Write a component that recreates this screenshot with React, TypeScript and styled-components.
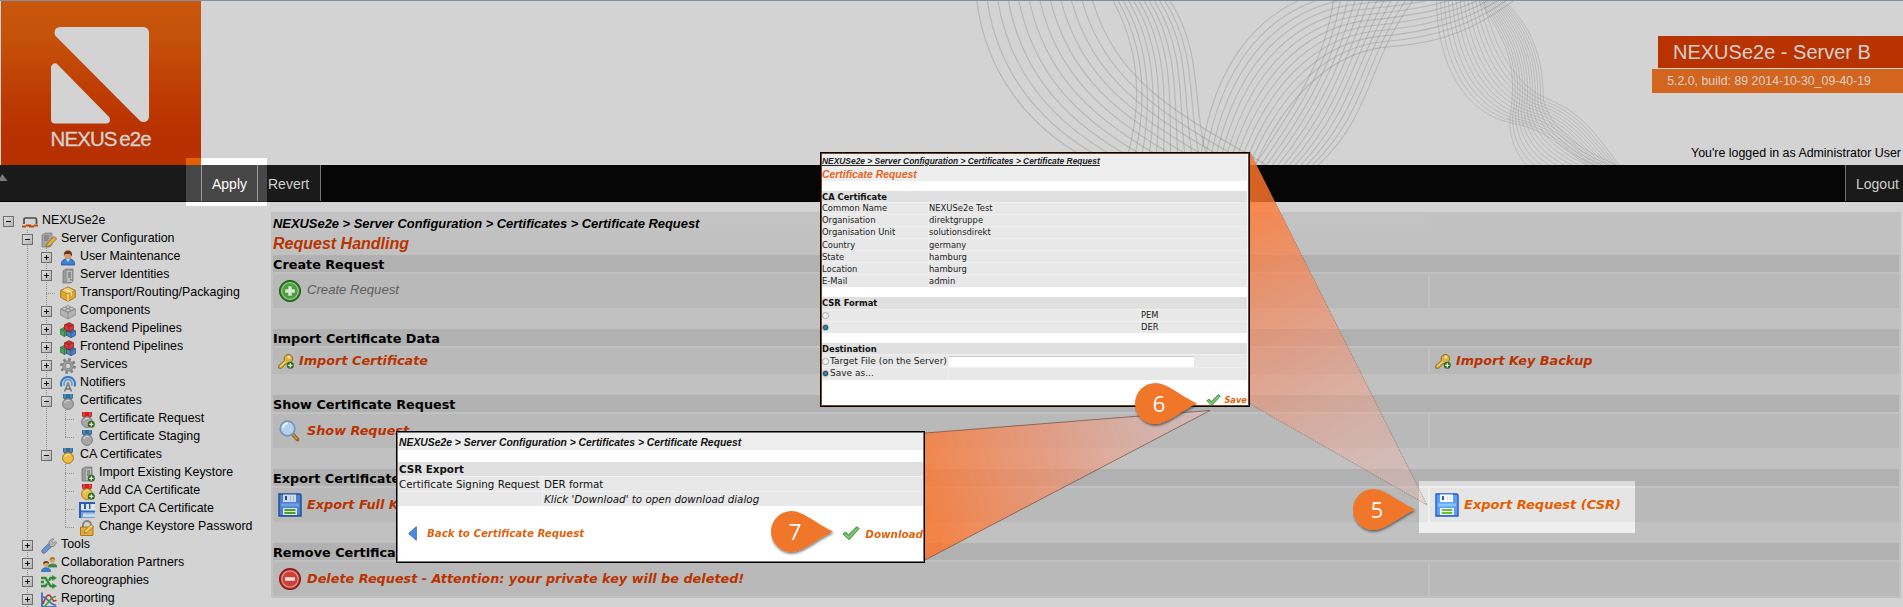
import React from 'react';
import styled, { createGlobalStyle, css } from 'styled-components';

const arial = '"Liberation Sans", Arial, sans-serif';
const verdana = '"DejaVu Sans", Verdana, sans-serif';

const Global = createGlobalStyle`
  * { box-sizing: border-box; }
  html, body { margin: 0; padding: 0; background: #d3d3d3; overflow: hidden; }
  svg { display: block; flex: none; }
`;

/* ---------- page frame ---------- */

const Page = styled.div`
  position: relative;
  height: 607px;
  overflow: hidden;
  display: flex;
  flex-direction: column;
  background: #d3d3d3;
  border-top: 1px solid #8090a8;
  font-family: ${arial};
  color: #000;
  white-space: nowrap;
`;

const Header = styled.header`
  position: relative;
  height: 164px;
  flex: none;
  display: flex;
  justify-content: space-between;
  padding-left: 1px;
`;

const Logo = styled.div`
  width: 200px;
  height: 164px;
  position: relative;
  background: linear-gradient(#c8560b 0%, #c6520a 22%, #bd3a02 60%, #b83100 82%, #b63000 100%);
`;

const WaveLayer = styled.div`
  position: absolute;
  left: 930px;
  top: -1px;
`;

const HeaderInfo = styled.div`
  position: relative;
  display: flex;
  flex-direction: column;
  align-items: flex-end;
  padding-top: 35px;
`;

const ServerName = styled.div`
  height: 32px;
  width: 245px;
  padding-left: 15px;
  line-height: 33px;
  font-size: 20px;
  background: #b93300;
  color: #d6d0cd;
`;

const BuildInfo = styled.div`
  height: 24px;
  margin-top: 1px;
  padding: 0 32px 0 15px;
  line-height: 24px;
  font-size: 12.35px;
  background: #d4651f;
  color: #dcd2ca;
`;

const UserInfo = styled.div`
  margin: 52px 2px 0 0;
  font-size: 12.4px;
  line-height: 17px;
`;

const NavBar = styled.nav`
  height: 37px;
  flex: none;
  display: flex;
  background: #060606;
  border-bottom: 1px solid #000;
  font-size: 14px;
  line-height: 38px;
  color: #d0d0d0;
`;

const NavSpacer = styled.div`
  width: 201px;
  background: #1a1a1a;
  padding-top: 9px;
`;

const NavItem = styled.div<{ $w: number; $pad: number; $end?: boolean }>`
  width: ${p => p.$w}px;
  padding-left: ${p => p.$pad}px;
  background: #1a1a1a;
  border-left: 1px solid #737373;
  ${p => p.$end && css`margin-left: auto;`}
`;

const NavEdge = styled.div`
  width: 1px;
  background: #737373;
`;

const Body = styled.div`
  flex: 1;
  display: flex;
  align-items: flex-start;
  padding-top: 10px;
`;

/* ---------- navigation tree ---------- */

const Tree = styled.aside`
  width: 271px;
  flex: none;
  padding-left: 3px;
`;

const TreeRow = styled.div`
  display: flex;
  height: 18px;
`;

const dots = 'repeating-linear-gradient(#8f8f8f 0 1px, transparent 1px 2px)';

const Guide = styled.div<{ $line: 'full' | 'half' | 'none'; $branch?: boolean }>`
  width: 19px;
  height: 18px;
  background-repeat: no-repeat;
  background-image: ${p => (p.$line === 'none' ? 'none' : dots)}
    ${p => p.$branch && ', repeating-linear-gradient(90deg, #8f8f8f 0 1px, transparent 1px 2px)'};
  background-position: 5px 0, 5px 9px;
  background-size: 1px ${p => (p.$line === 'half' ? '10px' : '100%')}, 9px 1px;
`;

const ToggleBox = styled.div`
  position: relative;
  top: 4px;
  width: 11px;
  height: 11px;
  border: 1px solid #6f6f6f;
  background: linear-gradient(135deg, #dedede, #b5b5b5);
`;

const Sign = styled.div<{ $plus: boolean }>`
  width: 9px;
  height: 9px;
  background:
    linear-gradient(#111, #111) 2px 4px / 5px 1px no-repeat
    ${p => p.$plus && ', linear-gradient(#111, #111) 4px 2px / 1px 5px no-repeat'};
`;

const TreeIcon = styled.div`
  width: 20px;
  padding-top: 2px;
`;

const TreeLabel = styled.span`
  font-size: 12.38px;
  line-height: 17px;
`;

/* ---------- main content ---------- */

const Main = styled.main`
  flex: 1;
  margin-right: 2px;
  padding: 2px;
  height: 386px;
  background: #c1c1c1;
  display: grid;
  gap: 2px;
  grid-template-columns: 1155px 1fr;
  grid-template-rows: 17px 20px 17px 34px 17px 17px 26px 17px 17px 34px 17px 17px 34px 17px 17px 34px;
`;

const Breadcrumb = styled.div`
  background: #c3c3c3;
  font: italic bold 12.92px/19px ${arial};
`;

const Title = styled.h1`
  grid-column: 1 / -1;
  margin: 0;
  font: italic bold 16px/21px ${arial};
  color: #b93300;
`;

const SectionHead = styled.h2`
  grid-column: 1 / -1;
  margin: 0;
  background: #b1b1b1;
  font: bold 12.8px/20px ${verdana};
`;

const Gap = styled.div`
  grid-column: 1 / -1;
`;

const Cell = styled.div`
  display: flex;
  align-items: center;
  gap: 5px;
  padding-left: 5px;
  background: #b9b9b9;
`;

const Action = styled.a<{ $lit?: boolean }>`
  font: italic bold 12.82px/16px ${verdana};
  color: ${p => (p.$lit ? '#b94c00' : '#b93300')};
  ${p => p.$lit && css`font-size: 13px;`}
`;

const DisabledAction = styled.span`
  font: italic 13.14px/16px ${arial};
  color: #5e5e5e;
  padding-bottom: 3px;
`;

/* ---------- annotations above the page ---------- */

const Overlay = styled.div`
  position: absolute;
  inset: -1px 0 0 0;
`;

const ApplySpot = styled.div`
  position: absolute;
  left: 186px;
  top: 158px;
  width: 81px;
  height: 48px;
  background: #fff;
`;

const SpotCorner = styled.div`
  width: 15px;
  height: 7px;
  background: #e66000;
`;

const SpotNav = styled.div`
  display: flex;
  height: 37px;
  padding-left: 15px;
  background: #474747;
  border-bottom: 1px solid #333;
`;

const SpotButton = styled.div`
  width: 57px;
  border: solid #9a9a9a;
  border-width: 0 1px;
  padding-left: 10px;
  font-size: 14px;
  line-height: 38px;
  color: #fff;
`;

const ExportSpot = styled.div`
  position: absolute;
  left: 1419px;
  top: 481px;
  width: 216px;
  height: 52px;
  backdrop-filter: brightness(1.24);
`;

const Beams = styled.svg`
  position: absolute;
  left: 0;
  top: 0;
`;

const Callout = styled.div<{ $x: number; $y: number }>`
  position: absolute;
  left: ${p => p.$x}px;
  top: ${p => p.$y}px;
`;

const CalloutDigit = styled.span`
  position: absolute;
  left: 14px;
  top: 0;
  width: 20px;
  text-align: center;
  font: 400 22.5px/41px "Open Sans", "Noto Sans", sans-serif;
  color: #fff;
`;

const Dialog = styled.section<{ $size: number }>`
  position: absolute;
  background: #fff;
  border: 1px solid #000;
  font: ${p => p.$size}px ${verdana};
  color: #222;
`;

const RequestDialog = styled(Dialog)`
  left: 820px;
  top: 152px;
  width: 430px;
  height: 255px;
  box-shadow: inset 0 0 0 1px #7a4320;
  padding: 1px 2px 0 1px;
`;

const ExportDialog = styled(Dialog)`
  left: 396px;
  top: 431px;
  width: 529px;
  height: 132px;
  border-width: 1px;
  box-shadow: inset 0 0 0 1px #777;
  padding: 1px;
  color: #111;
`;

const DialogHead = styled.div<{ $h: number }>`
  height: ${p => p.$h}px;
  background: #eee;
`;

const RequestCrumb = styled.div`
  font: italic bold 8.42px/14px ${arial};
  text-decoration: underline;
`;

const RequestTitle = styled.div`
  font: italic bold 10.4px/13px ${arial};
  color: #e8641b;
`;

const ExportCrumb = styled.div`
  padding-left: 1px;
  font: italic bold 10.37px/19px ${arial};
`;

const Group = styled.div<{ $top: number; $cols: string; $row: number; $inset?: number }>`
  display: grid;
  grid-template-columns: ${p => p.$cols};
  grid-auto-rows: ${p => p.$row}px;
  gap: 1px;
  margin-top: ${p => p.$top}px;
  background: #efefef;
  line-height: ${p => p.$row + 1}px;
  & > * { padding-left: ${p => p.$inset ?? 0}px; }
`;

const GroupHead = styled.div`
  grid-column: 1 / -1;
  background: #e0e0e0;
  font-weight: bold;
  color: #111;
`;

const Field = styled.div<{ $italic?: boolean }>`
  display: flex;
  align-items: center;
  background: #e8e8e8;
  ${p => p.$italic && css`font-style: italic;`}
`;

const WideText = styled.span`
  font-size: 9px;
`;

const Radio = styled.i<{ $on?: boolean }>`
  width: 7px;
  height: 7px;
  margin-right: 1px;
  border-radius: 50%;
  border: 1px solid #a8a8a8;
  background: ${p => (p.$on ? 'radial-gradient(circle, #2a86b8 0 30%, #123f66 60%)' : '#f4f4f4')};
`;

const TextInput = styled.div`
  width: 245px;
  height: 11px;
  background: #fff;
  border-top: 1px solid #ccc;
`;

const SaveBar = styled.div`
  display: flex;
  justify-content: flex-end;
  align-items: center;
  gap: 3px;
  margin-top: 13.5px;
`;

const ExportBar = styled.div`
  display: flex;
  align-items: center;
  margin-top: 17.5px;
  height: 20px;
  padding-left: 10px;
`;

const DialogLink = styled.a<{ $size: number }>`
  font: italic bold ${p => p.$size}px/14px ${verdana};
  color: #e4600f;
`;

const BackLabel = styled(DialogLink)`
  margin: 0 auto 0 10px;
`;

const DownloadLabel = styled(DialogLink)`
  margin-left: 5px;
`;

/* ---------- drawings ---------- */

type Pt = [number, number];
type Family = { a: Pt[]; b: Pt[]; n: number; w: number };

const families: Family[] = [
  { a: [[140, 0], [165, 200], [280, 390], [520, 500]], b: [[487, 0], [560, 240], [720, 330], [1010, 495]], n: 12, w: 3.3 },
  { a: [[548, 0], [625, 140], [640, 300], [592, 470]], b: [[718, 0], [820, 150], [785, 310], [830, 470]], n: 12, w: 3.3 },
  {
    a: [[812, 470], [850, 200], [980, 20], [1200, -30], [1320, -50], [1500, -30], [1700, -120]],
    b: [[975, 495], [1080, 260], [1230, 150], [1380, 140], [1530, 130], [1640, 90], [1780, -20]], n: 12, w: 3.3,
  },
  { a: [[975, 495], [1100, 310], [1190, 170], [1210, 0]], b: [[1165, 495], [1330, 340], [1310, 190], [1450, 0]], n: 12, w: 3.3 },
  {
    a: [[1520, 0], [1520, 200], [1610, 340], [1740, 368], [1860, 390], [1880, 440], [1975, 495]],
    b: [[1660, 0], [1700, 180], [1780, 270], [1860, 300], [1960, 340], [2010, 420], [2067, 495]], n: 13, w: 2.6,
  },
  {
    a: [[1645, 0], [1730, 120], [1765, 200], [1740, 350], [1735, 420], [1765, 470], [1790, 495]],
    b: [[1720, 0], [1820, 90], [1840, 200], [1840, 300], [1860, 380], [1930, 440], [2060, 495]], n: 13, w: 2.6,
  },
];

const strand = (f: Family, i: number) => {
  const t = i / (f.n - 1);
  const p = f.a.map(([x, y], k) => `${(x + (f.b[k][0] - x) * t).toFixed(1)} ${(y + (f.b[k][1] - y) * t).toFixed(1)}`);
  return `M${p[0]}C${p.slice(1).join(' ')}`;
};

const Waves = () => (
  <svg width="973" height="165" viewBox="0 0 2919 495" fill="none" stroke="#808080" strokeOpacity=".34">
    {families.map((f, k) =>
      Array.from({ length: f.n }, (_, i) => <path key={`${k}-${i}`} d={strand(f, i)} strokeWidth={f.w} />),
    )}
  </svg>
);

const LogoMark = () => (
  <svg width="200" height="164" viewBox="1 1 200 164">
    <g fill="#d3d3d3" stroke="#d3d3d3" strokeLinejoin="round">
      <path d="M60 32.5H143.500V116.500Z" strokeWidth="11" />
      <path d="M55 67.500V119.500H106Z" strokeWidth="8" />
    </g>
    <text
      x="50.500" y="145.500" fontFamily={arial} fontSize="20.500" letterSpacing="-.900"
      fill="#d6d3d0" stroke="#d6d3d0" strokeWidth=".3"
    >
      NEXUS<tspan dx="2.500">e2e</tspan>
    </text>
  </svg>
);

const PlusBadge = () => (
  <g>
    <circle cx="12.300" cy="12.300" r="3.500" fill="#2f6b1d" />
    <path d="M12.300 10.200v4.200M10.200 12.300h4.200" stroke="#e6f2dc" strokeWidth="1.300" />
  </g>
);

const Medal = ({ ribbon, disc, edge }: { ribbon: string; disc: string; edge: string }) => (
  <g>
    <path d="M3 0h10v4l-2 2H5L3 4z" fill={ribbon} />
    <path d="M5 0v4M11 0v4" stroke="#fff" strokeOpacity=".35" />
    <circle cx="8" cy="10" r="5.400" fill={disc} stroke={edge} />
    <path d="M4.800 9a3.500 3.500 0 0 1 5-2.200" stroke="#fff" strokeOpacity=".6" fill="none" />
  </g>
);

const Tower = () => (
  <g>
    <path d="M3 3l3-2h7v12l-2 2H3z" fill="#9b9b9b" stroke="#6f6f6f" strokeWidth=".7" />
    <path d="M7 3h5v11H7z" fill="#bdbdbd" />
    <path d="M8 5h3M8 7h3M8 9h3" stroke="#555" strokeWidth=".9" />
    <path d="M10 11h1.500v1.500H10z" fill="#2f9c2f" />
  </g>
);

const Brick = ({ x, y, c, d }: { x: number; y: number; c: string; d: string }) => (
  <g transform={`translate(${x} ${y})`}>
    <path d="M0 2.500L4.500.500 9 2.500V7L4.500 9.500 0 7z" fill={c} stroke={d} strokeWidth=".7" />
    <path d="M0 2.500l4.500 2 4.500-2M4.500 4.500v5" stroke={d} strokeWidth=".6" fill="none" />
    <ellipse cx="4.500" cy="1.800" rx="2" ry="1.200" fill={c} stroke={d} strokeWidth=".5" />
  </g>
);

const FloppyShape = () => (
  <g>
    <path d="M1 1h21l1 1v21H1z" fill="#4a7fd4" stroke="#1e4b9c" strokeWidth="1.400" />
    <path d="M5 1.500h13V9H5z" fill="#cfd9e8" />
    <path d="M7 3h2v4H7z" fill="#1e4b9c" />
    <path d="M12 3h1v5h-1zM15 3h1v5h-1z" fill="#a9b9d2" />
    <path d="M3 10.500h18v3H3z" fill="#6fa0e6" />
    <path d="M5 15h14v7H5z" fill="#dfe6d8" />
    <path d="M6.500 17h11M6.500 20h11" stroke="#4f9d2c" strokeWidth="1.800" />
  </g>
);

const icons: Record<string, React.ReactNode> = {
  nexus: (
    <g fill="none">
      <path d="M2 10V5.500A1.500 1.500 0 0 1 3.500 4h9.500A1.500 1.500 0 0 1 14.500 5.500V10" stroke="#4b4b4b" strokeWidth="1.700" />
      <path d="M0 12.500h4M4 11.500h4v2M9 12.500h3M12 11.500h4" stroke="#bf4a08" strokeWidth="2.200" />
    </g>
  ),
  config: (
    <g>
      <path d="M1 3l3-2h7v12l-2 2H1z" fill="#a5a5a5" stroke="#767676" strokeWidth=".7" />
      <path d="M3 4h5M3 6h5M3 8h4" stroke="#666" strokeWidth=".8" />
      <path d="M5 15l1.500-4L13 4.500l2.500 2.500L9 13.500z" fill="#e5b23a" stroke="#8f6413" strokeWidth=".8" />
      <path d="M12 5.500L13.500 4 16 6.500 14.500 8z" fill="#d9876c" />
    </g>
  ),
  user: (
    <g>
      <path d="M1.500 15c-1-4 3-6.500 6.500-6.500s7.500 2.500 6.500 6.500z" fill="#3a83d2" stroke="#1c4f94" strokeWidth=".8" />
      <path d="M6 9l2 3 2-3z" fill="#fff" opacity=".7" />
      <circle cx="8" cy="5.500" r="3.600" fill="#dc9a6a" />
      <path d="M4 6C3.500 2 5.500.500 8 .500S12.500 2 12 6c-1.500-1-2-2-2-2.500-1 .700-4 .700-5 .500z" fill="#6b3313" />
    </g>
  ),
  server: <Tower />,
  box: (
    <g>
      <path d="M.700 4.500L8 1l7.300 3.500v7L8 15.300.700 11.500z" fill="#e2a62f" stroke="#9a6b10" strokeWidth=".8" />
      <path d="M.700 4.500L8 8l7.300-3.500L8 1z" fill="#f2cc6c" stroke="#9a6b10" strokeWidth=".6" />
      <path d="M8 8v7M4.500 3L11.500 6.500v3" stroke="#fff0c0" strokeWidth="1" fill="none" />
    </g>
  ),
  component: (
    <g fill="#b4b4b4" stroke="#7c7c7c" strokeWidth=".7">
      <path d="M.700 5L8 2l7.300 3v6L8 15 .700 11z" />
      <path d="M.700 5L8 8.500 15.300 5M8 8.500V15" fill="none" />
      <ellipse cx="4.500" cy="4.800" rx="2" ry="1.300" fill="#d2d2d2" />
      <ellipse cx="8" cy="3" rx="2" ry="1.300" fill="#d2d2d2" />
      <ellipse cx="11.500" cy="4.800" rx="2" ry="1.300" fill="#d2d2d2" />
      <ellipse cx="8" cy="6.300" rx="2" ry="1.300" fill="#d2d2d2" />
    </g>
  ),
  bricks: (
    <g>
      <Brick x={0} y={5} c="#4fa05a" d="#2c6b35" />
      <Brick x={6.500} y={6.300} c="#4a7fc0" d="#234f86" />
      <Brick x={4.500} y={.3} c="#d63a3a" d="#8d1818" />
    </g>
  ),
  gear: (
    <g>
      <circle cx="8" cy="8" r="6.600" fill="none" stroke="#7d7d7d" strokeWidth="2.600" strokeDasharray="2.600 2.580" />
      <circle cx="8" cy="8" r="4" fill="none" stroke="#8a8a8a" strokeWidth="3.600" />
      <circle cx="8" cy="8" r="4" fill="none" stroke="#a8a8a8" strokeWidth="1.200" />
    </g>
  ),
  antenna: (
    <g fill="none">
      <path d="M1.500 10.500a7 7 0 1 1 13 0" stroke="#3878c8" strokeWidth="2" />
      <path d="M4.500 9.500a4 4 0 1 1 7 0" stroke="#5b97dd" strokeWidth="1.600" />
      <path d="M8 7.500L4.500 15.500M8 7.500l3.500 8M6 13h4" stroke="#707070" strokeWidth="1.500" />
      <circle cx="8" cy="7.500" r="1.400" fill="#8a8a8a" />
    </g>
  ),
  silverMedal: <Medal ribbon="#2f6c9f" disc="#a6a6a6" edge="#7b7b7b" />,
  redMedalPlus: <g><Medal ribbon="#cf2020" disc="#a6a6a6" edge="#7b7b7b" /><PlusBadge /></g>,
  goldMedal: <Medal ribbon="#2f6c9f" disc="#edbd45" edge="#a97a14" />,
  goldMedalPlus: <g><Medal ribbon="#cf2020" disc="#edbd45" edge="#a97a14" /><PlusBadge /></g>,
  serverPlus: <g><Tower /><PlusBadge /></g>,
  disk: (
    <g>
      <path d="M0 0h16v2H2v14H0z" fill="#2a5fb0" />
      <path d="M2 2h14v7H2z" fill="#dfe6ee" />
      <path d="M5 2h2v5H5zM10 2h1.500v5H10z" fill="#355f9e" />
      <path d="M2 8.500h14v2H2z" fill="#2f6cc4" />
      <path d="M2 10.500h14V16H2z" fill="#6f9fdc" />
      <path d="M4 11.500h12V15H4z" fill="#c9d8ea" />
    </g>
  ),
  lock: (
    <g>
      <path d="M4 8V5a4 4 0 0 1 8 0v3" fill="none" stroke="#858585" strokeWidth="2" />
      <path d="M1.500 7h12.500v8.500H1.500z" fill="#e3a93a" stroke="#9a6b10" strokeWidth=".8" />
      <path d="M5 13l1-2.500 6-6 2.500 2-6.500 6z" fill="#f3d070" stroke="#8f6413" strokeWidth=".7" />
    </g>
  ),
  wrench: (
    <g>
      <path d="M1.300 14.700a2.300 2.300 0 0 1 0-3L7.500 5.500l3.200 3.200-6.400 6a2.300 2.300 0 0 1-3 0z" fill="#6e93c8" stroke="#3c5f96" strokeWidth=".7" />
      <path d="M8.500 7l-.500-3.500L11.500.500l1.500.500-2 2.500 1.500 1.500 2.500-1.500.500 1.500-3 3.500H9.500z" fill="#b5b5b5" stroke="#757575" strokeWidth=".7" />
    </g>
  ),
  people: (
    <g>
      <path d="M7 11c0-4 9-4 9-.500V11z" fill="#3f9146" stroke="#245e2a" strokeWidth=".6" />
      <circle cx="11.300" cy="4" r="2.800" fill="#dba36b" /><path d="M8.500 4c0-4 6-4 5.500 0L12 2.800z" fill="#b07416" />
      <path d="M.500 15.500c-.500-5 9.500-5 9 0z" fill="#3a83d2" stroke="#1c4f94" strokeWidth=".6" />
      <circle cx="5" cy="8" r="2.800" fill="#dba36b" /><path d="M2 8c0-4 6.500-4 6 0L6 6.600z" fill="#6b3313" />
    </g>
  ),
  shuffle: (
    <g fill="none" stroke="#2f8a35" strokeWidth="2.300">
      <path d="M0 4h4.500l5 8H12M0 12h4.500l1.500-2.500M8 6.500L9.500 4H12M0 8h3" />
      <path d="M11.500 1.500L15.500 4l-4 2.500zM11.500 9.500l4 2.500-4 2.500z" fill="#2f8a35" strokeWidth=".5" />
    </g>
  ),
  chart: (
    <g fill="none" strokeWidth="1.600">
      <path d="M1 .500V15H15.500" stroke="#2a5fb0" />
      <path d="M2 12C5 3 8 1 10 5s3 5 5.500 3" stroke="#c92a2a" />
      <path d="M2 5c4 0 8 9 13 8" stroke="#2a6fc0" />
      <path d="M2.500 14.500c4 0 6-10 12.500-10" stroke="#3a9a3a" />
    </g>
  ),
};

const KeyIcon = () => (
  <svg width="16" height="16" viewBox="0 0 16 16">
    <path d="M.800 15.200V12.500L6.500 7.500A4.300 4.300 0 1 1 10 10L6.500 11.500 5.500 13.500 3.500 15.200z" fill="#dcb143" stroke="#86640f" strokeWidth=".9" />
    <circle cx="11" cy="4.300" r="1.300" fill="#fbeeb8" />
    <path d="M2 13.500l6-5" stroke="#f6e08e" />
    <PlusBadge />
  </svg>
);

const AddIcon = () => (
  <svg width="24" height="24" viewBox="0 0 24 24">
    <circle cx="12" cy="12" r="10.600" fill="#2c7a24" stroke="#1d5c17" />
    <circle cx="12" cy="12" r="8.300" fill="#4a9e3c" stroke="#a3c499" strokeWidth="1.300" />
    <path d="M12 7.200v9.600M7.200 12h9.600" stroke="#dce6d8" strokeWidth="3.400" />
  </svg>
);

const SearchIcon = () => (
  <svg width="24" height="24" viewBox="0 0 24 24">
    <path d="M14.500 15l5 5.500" stroke="#8f6420" strokeWidth="3.800" strokeLinecap="round" />
    <path d="M14.500 15l4.500 5" stroke="#c99848" strokeWidth="1.600" strokeLinecap="round" />
    <circle cx="9.500" cy="9.500" r="7.300" fill="#b2d1ec" stroke="#7295b8" strokeWidth="1.700" />
    <path d="M5 9a4.500 4.500 0 0 1 5-4.500" stroke="#edf5fb" strokeWidth="1.800" fill="none" />
  </svg>
);

const FloppyIcon = () => <svg width="24" height="24" viewBox="0 0 24 24"><FloppyShape /></svg>;

const StopIcon = () => (
  <svg width="24" height="24" viewBox="0 0 24 24">
    <circle cx="12" cy="12" r="10.400" fill="#bf2b24" stroke="#8c1712" strokeWidth="1.200" />
    <circle cx="12" cy="12" r="8.200" fill="#cc4038" stroke="#d99d97" strokeWidth="1.200" />
    <path d="M7 12h10" stroke="#e6dedd" strokeWidth="3.600" />
  </svg>
);

const CheckIcon = ({ size }: { size: number }) => (
  <svg width={size} height={size * 0.8} viewBox="0 0 20 16">
    <path d="M1 9l3.200-2.300 3 3.300L16.300.800 19 2.800 8 15.200z" fill="#62b857" stroke="#35843a" strokeWidth="1" />
    <path d="M3 9l4.500 4L17 3" stroke="#a9dca0" strokeWidth="1" fill="none" />
  </svg>
);

const BackIcon = () => (
  <svg width="9" height="15" viewBox="0 0 9 15">
    <path d="M8.300.700v13.600L.700 7.500z" fill="#4f8ce0" stroke="#2357a8" strokeWidth=".8" />
  </svg>
);

const Pin = ({ n, x, y }: { n: number; x: number; y: number }) => (
  <Callout $x={x} $y={y}>
    <svg width="68" height="48" viewBox="0 0 68 48">
      <defs>
        <filter id={`shade${n}`} x="-10%" y="-10%" width="130%" height="140%">
          <feDropShadow dx="0.500" dy="1.800" stdDeviation="1.200" floodColor="#000" floodOpacity=".5" />
        </filter>
      </defs>
      <path d="M20.500 0C32 0 46 13 62 20.500C46 28 32 41 20.500 41A20.500 20.500 0 0 1 20.500 0Z" fill="#f0762a" filter={`url(#shade${n})`} />
    </svg>
    <CalloutDigit>{n}</CalloutDigit>
  </Callout>
);

/* ---------- tree data ---------- */

type Node = { label: string; icon: string; level: number; toggle?: '+' | '-'; last?: boolean; closed?: boolean };

const nodes: Node[] = [
  { label: 'NEXUSe2e', icon: 'nexus', level: 0, toggle: '-', last: true },
  { label: 'Server Configuration', icon: 'config', level: 1, toggle: '-' },
  { label: 'User Maintenance', icon: 'user', level: 2, toggle: '+' },
  { label: 'Server Identities', icon: 'server', level: 2, toggle: '+' },
  { label: 'Transport/Routing/Packaging', icon: 'box', level: 2 },
  { label: 'Components', icon: 'component', level: 2, toggle: '+' },
  { label: 'Backend Pipelines', icon: 'bricks', level: 2, toggle: '+' },
  { label: 'Frontend Pipelines', icon: 'bricks', level: 2, toggle: '+' },
  { label: 'Services', icon: 'gear', level: 2, toggle: '+' },
  { label: 'Notifiers', icon: 'antenna', level: 2, toggle: '+' },
  { label: 'Certificates', icon: 'silverMedal', level: 2, toggle: '-' },
  { label: 'Certificate Request', icon: 'redMedalPlus', level: 3 },
  { label: 'Certificate Staging', icon: 'silverMedal', level: 3, last: true },
  { label: 'CA Certificates', icon: 'goldMedal', level: 2, toggle: '-', last: true },
  { label: 'Import Existing Keystore', icon: 'serverPlus', level: 3, closed: true },
  { label: 'Add CA Certificate', icon: 'goldMedalPlus', level: 3, closed: true },
  { label: 'Export CA Certificate', icon: 'disk', level: 3, closed: true },
  { label: 'Change Keystore Password', icon: 'lock', level: 3, last: true, closed: true },
  { label: 'Tools', icon: 'wrench', level: 1, toggle: '+' },
  { label: 'Collaboration Partners', icon: 'people', level: 1, toggle: '+' },
  { label: 'Choreographies', icon: 'shuffle', level: 1, toggle: '+' },
  { label: 'Reporting', icon: 'chart', level: 1, toggle: '+' },
];

const TreeItem = ({ node }: { node: Node }) => (
  <TreeRow>
    {Array.from({ length: node.level }, (_, i) => (
      <Guide key={i} $line={i === 0 || (i === 2 && node.closed) ? 'none' : 'full'} />
    ))}
    <Guide $line={node.level === 0 ? 'none' : node.last ? 'half' : 'full'} $branch={!node.toggle}>
      {node.toggle && <ToggleBox><Sign $plus={node.toggle === '+'} /></ToggleBox>}
    </Guide>
    <TreeIcon><svg width="16" height="16" viewBox="0 0 16 16">{icons[node.icon]}</svg></TreeIcon>
    <TreeLabel>{node.label}</TreeLabel>
  </TreeRow>
);

const subject = [
  ['Common Name', 'NEXUSe2e Test'],
  ['Organisation', 'direktgruppe'],
  ['Organisation Unit', 'solutionsdirekt'],
  ['Country', 'germany'],
  ['State', 'hamburg'],
  ['Location', 'hamburg'],
  ['E-Mail', 'admin'],
];

const crumb = 'NEXUSe2e > Server Configuration > Certificates > Certificate Request';

export default function App() {
  return (
    <Page>
      <Global />
      <Header>
        <WaveLayer><Waves /></WaveLayer>
        <Logo><LogoMark /></Logo>
        <HeaderInfo>
          <ServerName>NEXUSe2e - Server B</ServerName>
          <BuildInfo>5.2.0, build: 89 2014-10-30_09-40-19</BuildInfo>
          <UserInfo>You're logged in as Administrator User</UserInfo>
        </HeaderInfo>
      </Header>
      <NavBar>
        <NavSpacer>
          <svg width="8" height="8" viewBox="0 0 8 8"><path d="M-2 7L2.200 0 7.500 7z" fill="#7c7c7c" /></svg>
        </NavSpacer>
        <NavItem $w={56} $pad={10}>Apply</NavItem>
        <NavItem $w={63} $pad={10}>Revert</NavItem>
        <NavEdge />
        <NavItem $w={58} $pad={10} $end>Logout</NavItem>
      </NavBar>
      <Body>
        <Tree>{nodes.map(n => <TreeItem key={n.label} node={n} />)}</Tree>
        <Main>
          <Breadcrumb>{crumb}</Breadcrumb>
          <div />
          <Title>Request Handling</Title>
          <SectionHead>Create Request</SectionHead>
          <Cell><AddIcon /><DisabledAction>Create Request</DisabledAction></Cell>
          <Cell />
          <Gap />
          <SectionHead>Import Certificate Data</SectionHead>
          <Cell><KeyIcon /><Action>Import Certificate</Action></Cell>
          <Cell><KeyIcon /><Action>Import Key Backup</Action></Cell>
          <Gap />
          <SectionHead>Show Certificate Request</SectionHead>
          <Cell><SearchIcon /><Action>Show Request</Action></Cell>
          <Cell />
          <Gap />
          <SectionHead>Export Certificate</SectionHead>
          <Cell><FloppyIcon /><Action>Export Full K</Action></Cell>
          <Cell><FloppyIcon /><Action $lit>Export Request (CSR)</Action></Cell>
          <Gap />
          <SectionHead>Remove Certifica</SectionHead>
          <Cell><StopIcon /><Action>Delete Request - Attention: your private key will be deleted!</Action></Cell>
          <Cell />
        </Main>
      </Body>

      <Overlay>
        <ApplySpot>
          <SpotCorner />
          <SpotNav><SpotButton>Apply</SpotButton></SpotNav>
        </ApplySpot>
        <ExportSpot />
        <Beams width="1903" height="607" viewBox="0 0 1903 607">
          <defs>
            <linearGradient id="toExport" gradientUnits="userSpaceOnUse" x1="1240" y1="190" x2="1400" y2="480">
              <stop offset="0" stopColor="#ff7428" stopOpacity=".85" />
              <stop offset=".5" stopColor="#fa8a62" stopOpacity=".55" />
              <stop offset="1" stopColor="#f0b8b0" stopOpacity=".35" />
            </linearGradient>
            <linearGradient id="toSave" gradientUnits="userSpaceOnUse" x1="925" y1="500" x2="1190" y2="420">
              <stop offset="0" stopColor="#ff7428" stopOpacity=".8" />
              <stop offset=".5" stopColor="#fa8a62" stopOpacity=".6" />
              <stop offset="1" stopColor="#f0b8b0" stopOpacity=".4" />
            </linearGradient>
          </defs>
          <path d="M1250 152L1427 505L1250 404Z" fill="url(#toExport)" />
          <path d="M1250 152L1427 505L1250 404" fill="none" stroke="#6a5a55" strokeOpacity=".6" strokeWidth=".8" strokeDasharray="1.500 1" />
          <path d="M925 433L1210 410.500L925 560Z" fill="url(#toSave)" />
          <path d="M925 433L1210 410.500L925 560" fill="none" stroke="#6a4030" strokeOpacity=".8" strokeWidth=".8" />
        </Beams>

        <RequestDialog $size={8.4}>
          <DialogHead $h={27}>
            <RequestCrumb>{crumb}</RequestCrumb>
            <RequestTitle>Certificate Request</RequestTitle>
          </DialogHead>
          <Group $top={9.5} $cols="106px 1fr" $row={11.15}>
            <GroupHead>CA Certificate</GroupHead>
            {subject.map(([k, v]) => (
              <React.Fragment key={k}><Field>{k}</Field><Field>{v}</Field></React.Fragment>
            ))}
          </Group>
          <Group $top={10.8} $cols="318px 1fr" $row={11.2}>
            <GroupHead>CSR Format</GroupHead>
            <Field><Radio /></Field><Field>PEM</Field>
            <Field><Radio $on /></Field><Field>DER</Field>
          </Group>
          <Group $top={9.6} $cols="126px 1fr" $row={11.7}>
            <GroupHead>Destination</GroupHead>
            <Field><Radio /><WideText>Target File (on the Server)</WideText></Field>
            <Field><TextInput /></Field>
            <Field><Radio $on /><WideText>Save as...</WideText></Field>
            <Field />
          </Group>
          <SaveBar><CheckIcon size={15} /><DialogLink $size={8.3}>Save</DialogLink></SaveBar>
        </RequestDialog>

        <ExportDialog $size={10.33}>
          <DialogHead $h={17}><ExportCrumb>{crumb}</ExportCrumb></DialogHead>
          <Group $top={12} $cols="144px 1fr" $row={14} $inset={1}>
            <GroupHead>CSR Export</GroupHead>
            <Field>Certificate Signing Request</Field>
            <Field>DER format</Field>
            <Field />
            <Field $italic>Klick 'Download' to open download dialog</Field>
          </Group>
          <ExportBar>
            <BackIcon />
            <BackLabel $size={10.2}>Back to Certificate Request</BackLabel>
            <CheckIcon size={18} />
            <DownloadLabel $size={10.35}>Download</DownloadLabel>
          </ExportBar>
        </ExportDialog>

        <Pin n={5} x={1353} y={489} />
        <Pin n={6} x={1135} y={383} />
        <Pin n={7} x={771} y={511} />
      </Overlay>
    </Page>
  );
}
